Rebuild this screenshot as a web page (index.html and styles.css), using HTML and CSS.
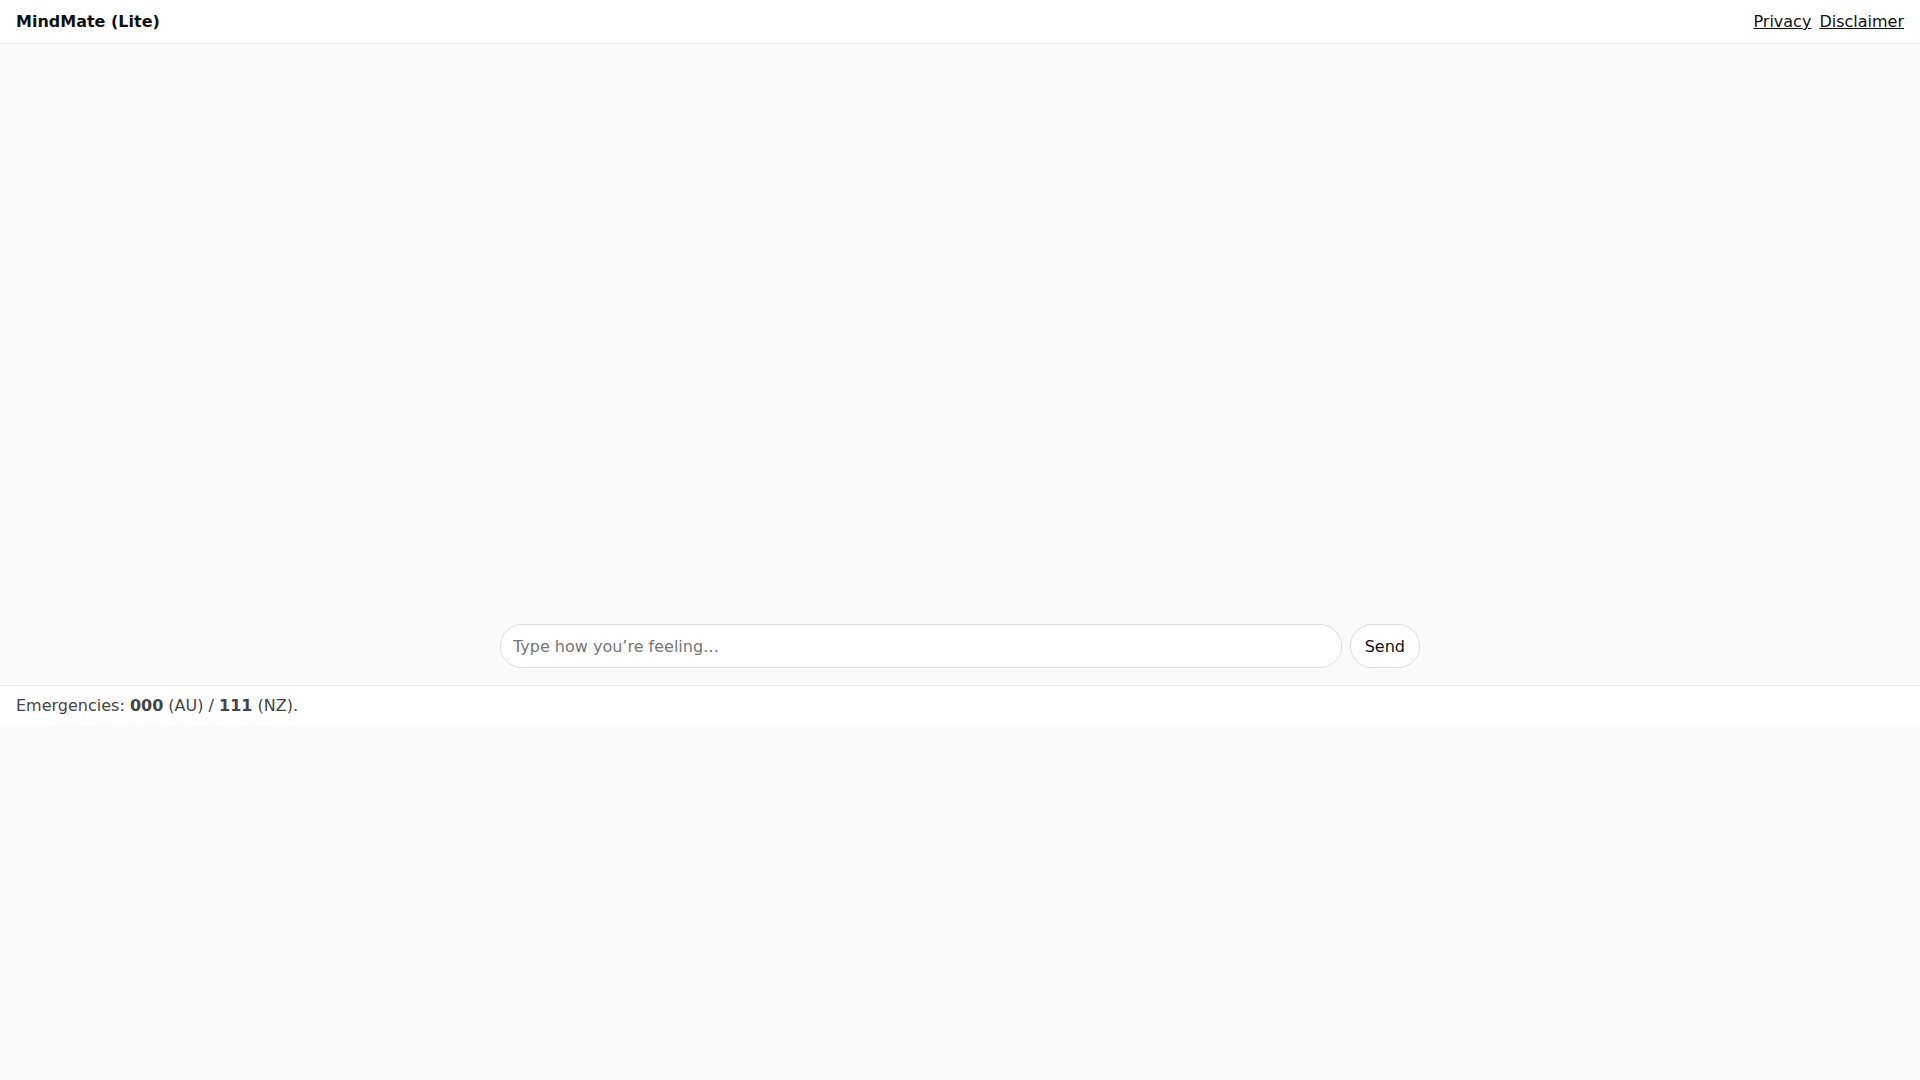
FILE: index.html
```html
<!DOCTYPE html>
<html lang="en">
<head>
<meta charset="utf-8">
<title>MindMate (Lite)</title>
<link rel="stylesheet" href="styles.css">
</head>
<body>
<header class="topbar">
  <div class="brand">MindMate (Lite)</div>
  <nav class="links">
    <a href="#">Privacy</a>
    <a href="#">Disclaimer</a>
  </nav>
</header>
<main class="chat">
  <div class="log"></div>
  <form class="composer">
    <input class="msg" type="text" placeholder="Type how you’re feeling…">
    <button class="send" type="button">Send</button>
  </form>
</main>
<footer class="foot">
  Emergencies: <strong>000</strong> (AU) / <strong>111</strong> (NZ).
</footer>
</body>
</html>
```

FILE: styles.css
```css
* { box-sizing: border-box; }
html, body { margin: 0; padding: 0; }
body {
  background: #fafafa;
  font-family: "DejaVu Sans", sans-serif;
  font-size: 16px;
  color: #111;
}
.topbar {
  display: flex;
  justify-content: space-between;
  align-items: center;
  background: #fff;
  border-bottom: 1px solid #eaeaea;
  padding: 12px 16px;
}
.brand { font-weight: bold; }
.links { display: flex; gap: 8px; }
.links a { color: #111; text-decoration: underline; }
.chat {
  height: 641px;
  display: flex;
  flex-direction: column;
}
.log { flex: 1; }
.composer {
  width: 920px;
  margin: 0 auto;
  display: flex;
  gap: 8px;
  padding: 0 0 17px;
}
.msg {
  flex: 1;
  height: 44px;
  padding: 0 12px;
  border: 1px solid #ddd;
  border-radius: 22px;
  background: #fff;
  font-family: "DejaVu Sans", sans-serif;
  font-size: 16px;
  color: #111;
  outline: none;
}
.msg::placeholder { color: #767676; }
.send {
  height: 44px;
  padding: 0 14px;
  border: 1px solid #ddd;
  border-radius: 22px;
  background: #fff;
  font-family: "DejaVu Sans", sans-serif;
  font-size: 16px;
  color: #111;
}
.foot {
  background: #fff;
  border-top: 1px solid #eaeaea;
  padding: 10px 16px;
  color: #444;
}
```
